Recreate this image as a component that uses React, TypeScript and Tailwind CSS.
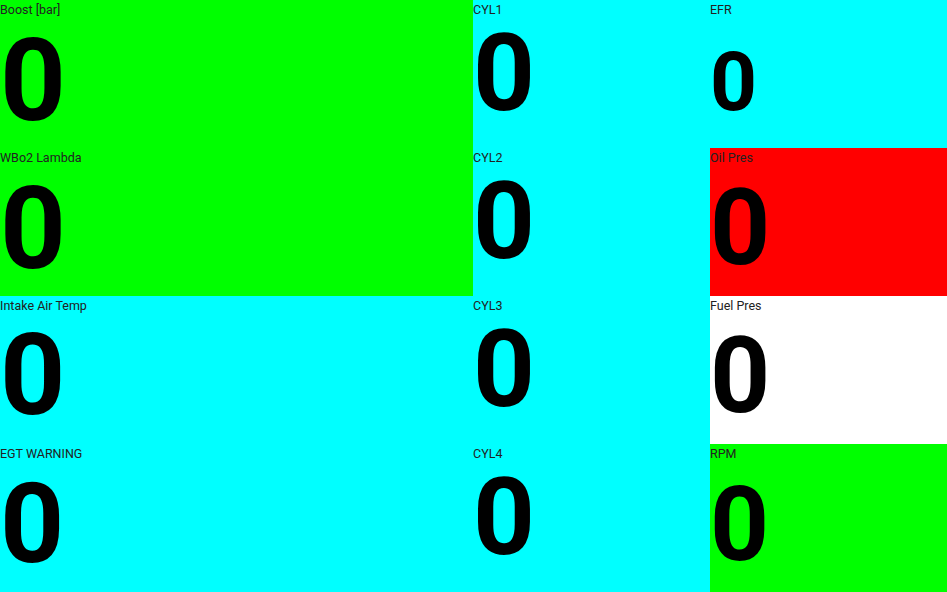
import React from 'react';

interface Gauge {
  label: string;
  value: string;
  bg: string;
  labelClass: string;
  valueClass: string;
}

const baseLabel = 'leading-[20px]';
const tightLabel = 'leading-[18px] pt-[1px]';

// dashboard cells, column by column
const leftGauges: Gauge[] = [
  { label: 'Boost [bar]', value: '0', bg: 'bg-[#00ff00]', labelClass: baseLabel, valueClass: 'text-[115px] mt-[3px]' },
  { label: 'WBo2 Lambda', value: '0', bg: 'bg-[#00ff00]', labelClass: baseLabel, valueClass: 'text-[115px] mt-[3px]' },
  { label: 'Intake Air Temp', value: '0', bg: 'bg-[#00ffff]', labelClass: baseLabel, valueClass: 'text-[114px] mt-[2px]' },
  { label: 'EGT WARNING', value: '0', bg: 'bg-[#00ffff]', labelClass: baseLabel, valueClass: 'text-[112px] mt-[4px]' },
];

const cylGauges: Gauge[] = [
  { label: 'CYL1', value: '0', bg: 'bg-[#00ffff]', labelClass: tightLabel, valueClass: 'text-[108px]' },
  { label: 'CYL2', value: '0', bg: 'bg-[#00ffff]', labelClass: tightLabel, valueClass: 'text-[108px]' },
  { label: 'CYL3', value: '0', bg: 'bg-[#00ffff]', labelClass: tightLabel, valueClass: 'text-[108px]' },
  { label: 'CYL4', value: '0', bg: 'bg-[#00ffff]', labelClass: tightLabel, valueClass: 'text-[108px]' },
];

const rightGauges: Gauge[] = [
  { label: 'EFR', value: '0', bg: 'bg-[#00ffff]', labelClass: baseLabel, valueClass: 'text-[82px] mt-[21px]' },
  { label: 'Oil Pres', value: '0', bg: 'bg-[#ff0000]', labelClass: baseLabel, valueClass: 'text-[105px] mt-[8px]' },
  { label: 'Fuel Pres', value: '0', bg: 'bg-white', labelClass: baseLabel, valueClass: 'text-[105px] mt-[8px]' },
  { label: 'RPM', value: '0', bg: 'bg-[#00ff00]', labelClass: baseLabel, valueClass: 'text-[103px] mt-[9px]' },
];

function GaugeCell({ gauge }: { gauge: Gauge }) {
  return (
    <div className={`flex flex-col overflow-hidden ${gauge.bg}`}>
      <div className={`text-[12.5px] text-[#222] ${gauge.labelClass}`}>{gauge.label}</div>
      <div className={`font-bold leading-none text-black ${gauge.valueClass}`}>{gauge.value}</div>
    </div>
  );
}

export default function App() {
  return (
    <div
      className="grid h-[592px] w-[947px] grid-cols-[473px_237px_237px] overflow-hidden bg-[#00ffff]"
      style={{ fontFamily: 'Roboto, "Noto Sans", sans-serif' }}
    >
      <div className="grid grid-rows-4">
        {leftGauges.map((g) => (
          <GaugeCell key={g.label} gauge={g} />
        ))}
      </div>
      <div className="grid grid-rows-4">
        {cylGauges.map((g) => (
          <GaugeCell key={g.label} gauge={g} />
        ))}
      </div>
      <div className="grid grid-rows-4">
        {rightGauges.map((g) => (
          <GaugeCell key={g.label} gauge={g} />
        ))}
      </div>
    </div>
  );
}
